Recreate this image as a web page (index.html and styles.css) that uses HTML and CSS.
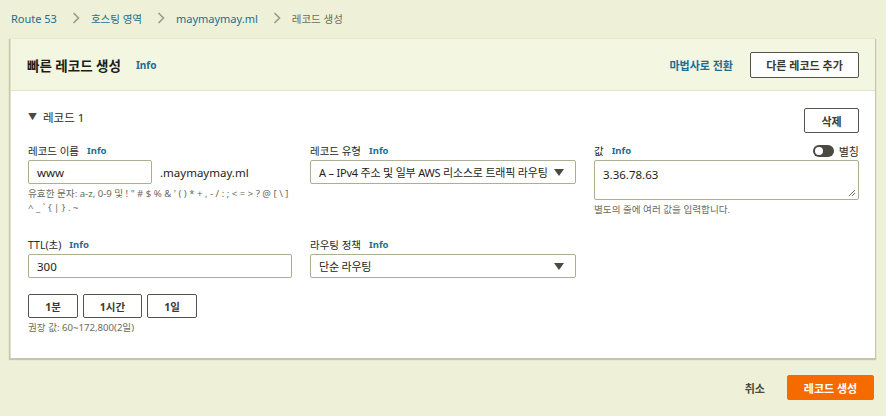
FILE: index.html
```html
<!DOCTYPE html>
<html lang="ko">
<head>
<meta charset="utf-8">
<link rel="stylesheet" href="styles.css">
</head>
<body>
<nav class="crumbs">
  <a class="crumb-link">Route 53</a>
  <span class="sep"><svg width="8" height="12" viewBox="0 0 8 12"><path d="M1.5 1l5 5-5 5" fill="none" stroke="#9a9c8a" stroke-width="1.6"/></svg></span>
  <a class="crumb-link ko">호스팅 영역</a>
  <span class="sep"><svg width="8" height="12" viewBox="0 0 8 12"><path d="M1.5 1l5 5-5 5" fill="none" stroke="#9a9c8a" stroke-width="1.6"/></svg></span>
  <a class="crumb-link">maymaymay.ml</a>
  <span class="sep"><svg width="8" height="12" viewBox="0 0 8 12"><path d="M1.5 1l5 5-5 5" fill="none" stroke="#9a9c8a" stroke-width="1.6"/></svg></span>
  <span class="crumb-current ko">레코드 생성</span>
</nav>

<section class="card">
  <header class="card-head">
    <h1 class="title">빠른 레코드 생성</h1>
    <span class="info info-title">Info</span>
    <span class="spacer"></span>
    <a class="wizard">마법사로 전환</a>
    <button class="btn btn-add">다른 레코드 추가</button>
  </header>
  <div class="card-body">
    <div class="rec-head">
      <span class="caret">▼</span>
      <span class="rec-title">레코드 1</span>
      <span class="spacer"></span>
      <button class="btn btn-del">삭제</button>
    </div>
    <div class="grid">
      <div class="field">
        <div class="label-row"><span class="label">레코드 이름</span><span class="info">Info</span></div>
        <div class="name-row">
          <div class="input input-name">www</div>
          <span class="suffix">.maymaymay.ml</span>
        </div>
        <div class="help">유효한 문자: a-z, 0-9 및 ! " # $ % &amp; ' ( ) * + , - / : ; &lt; = &gt; ? @ [ \ ]<br>^ _ ` { | } . ~</div>
      </div>
      <div class="field">
        <div class="label-row"><span class="label">레코드 유형</span><span class="info">Info</span></div>
        <div class="input select"><span class="sel-text">A – IPv4 주소 및 일부 AWS 리소스로 트래픽 라우팅</span><span class="arrow"></span></div>
      </div>
      <div class="field">
        <div class="label-row">
          <span class="label">값</span><span class="info">Info</span>
          <span class="spacer"></span>
          <span class="toggle"><span class="knob"></span></span>
          <span class="label toggle-label">별칭</span>
        </div>
        <div class="input textarea">3.36.78.63
          <svg class="grip" width="8" height="8" viewBox="0 0 8 8"><path d="M7 1L1 7M7 4L4 7" stroke="#6a6a5a" stroke-width="1"/></svg>
        </div>
        <div class="help">별도의 줄에 여러 값을 입력합니다.</div>
      </div>

      <div class="field">
        <div class="label-row"><span class="label">TTL(초)</span><span class="info">Info</span></div>
        <div class="input">300</div>
        <div class="ttl-btns">
          <button class="btn btn-ttl w1">1분</button>
          <button class="btn btn-ttl w2">1시간</button>
          <button class="btn btn-ttl w3">1일</button>
        </div>
        <div class="help">권장 값: 60~172,800(2일)</div>
      </div>
      <div class="field">
        <div class="label-row"><span class="label">라우팅 정책</span><span class="info">Info</span></div>
        <div class="input select"><span class="sel-text">단순 라우팅</span><span class="arrow"></span></div>
      </div>
      <div></div>
    </div>
  </div>
</section>

<footer class="actions">
  <a class="cancel">취소</a>
  <button class="btn btn-primary">레코드 생성</button>
</footer>
</body>
</html>
```
FILE: styles.css
```css
* { box-sizing: border-box; }
html, body { margin: 0; padding: 0; }
body {
  background: #eef1d7;
  font-family: "Noto Sans", "Noto Sans CJK KR", sans-serif;
  color: #2a2a22;
  width: 886px;
  height: 416px;
  overflow: hidden;
}
.spacer { flex: 1; }

.crumbs {
  display: flex;
  align-items: center;
  height: 39px;
  padding: 0 0 3px 11px;
  font-size: 11px;
}
.crumbs .ko { font-size: 10.5px; }
.crumb-link { color: #1b6d92; }
.crumb-current { color: #6b6b5c; }
.sep { display: inline-flex; margin: 0 11px 0 15px; }

.card {
  margin: 0 11px 0 10px;
  background: #fff;
  border-left: 1px solid #dfe2c8;
  box-shadow: 0 1px 1px 1px rgba(120,120,90,0.35);
  height: 319px;
}
.card-head {
  display: flex;
  align-items: center;
  height: 52px;
  padding: 0 16px 0 16px;
  background: #f3f6e1;
  border-bottom: 1px solid #e0e4c8;
}
.title {
  margin: 0;
  font-size: 13.5px;
  font-weight: 700;
  color: #1e1e18;
}
.info {
  color: #1b6d92;
  font-weight: 700;
  font-size: 9.5px;
  margin-left: 8px;
}
.info-title { margin-left: 15px; font-size: 10px; }
.wizard {
  color: #1b6d92;
  font-weight: 700;
  font-size: 11px;
  margin-right: 17px;
}
.btn {
  font-family: inherit;
  background: #fff;
  border: 1px solid #54554a;
  border-radius: 2px;
  color: #3a3a30;
  font-weight: 700;
  font-size: 11px;
  padding: 0;
  cursor: pointer;
}
.btn-add { width: 109px; height: 26px; }

.card-body { padding: 16px 16px 0 17px; }
.rec-head {
  display: flex;
  align-items: center;
  height: 26px;
}
.caret { font-size: 9px; color: #4a4a40; margin-right: 6px; margin-bottom: 7px; }
.rec-title { font-size: 11.5px; color: #2a2a22; margin-bottom: 7px; }
.btn-del { width: 55px; height: 25px; margin-top: 1px; }

.grid {
  display: grid;
  grid-template-columns: 264px 266px 265px;
  column-gap: 18px;
  margin-top: 9px;
}
.field { min-height: 94px; }
.label-row {
  display: flex;
  align-items: center;
  height: 17px;
  margin-bottom: 1px;
}
.label { font-size: 10.5px; color: #2a2a22; }
.input {
  height: 24px;
  border: 1px solid #aab090;
  border-radius: 2px;
  background: #fff;
  font-size: 11.5px;
  padding: 0 8px;
  display: flex;
  align-items: center;
  color: #1e1e18;
}
.name-row { display: flex; align-items: center; }
.input-name { width: 124px; padding-left: 8px; }
.suffix { font-size: 11.5px; margin-left: 8px; color: #1e1e18; }
.help {
  font-size: 9.6px;
  color: #6b6b5c;
  line-height: 14px;
  margin-top: 3px;
}
.select { justify-content: space-between; }
.sel-text { white-space: nowrap; font-size: 11px; letter-spacing: -0.2px; }
.arrow {
  width: 0; height: 0;
  border-left: 5px solid transparent;
  border-right: 5px solid transparent;
  border-top: 7px solid #4a4a40;
  margin-right: 3px;
  flex: none;
}
.toggle {
  width: 21px; height: 12px;
  border-radius: 6px;
  background: #4a4a40;
  position: relative;
  margin-right: 5px;
}
.knob {
  position: absolute;
  left: 2px; top: 2px;
  width: 8px; height: 8px;
  border-radius: 50%;
  background: #fff;
}
.toggle-label { font-size: 11px; }
.textarea {
  height: 40px;
  align-items: flex-start;
  padding-top: 6px;
  position: relative;
}
.grip { position: absolute; right: 2px; bottom: 2px; }

.ttl-btns { display: flex; gap: 5px; margin-top: 16px; }
.btn-ttl { height: 24px; font-size: 10.5px; }
.w1 { width: 50px; }
.w2 { width: 59px; }
.w3 { width: 50px; }

.actions {
  display: flex;
  align-items: center;
  justify-content: flex-end;
  padding: 17px 12px 0 0;
}
.cancel { font-size: 11px; font-weight: 700; color: #4a4a40; margin-right: 22px; }
.btn-primary {
  width: 87px;
  height: 25px;
  background: #f66b00;
  border: 1px solid #f66b00;
  color: #fff;
}
```
